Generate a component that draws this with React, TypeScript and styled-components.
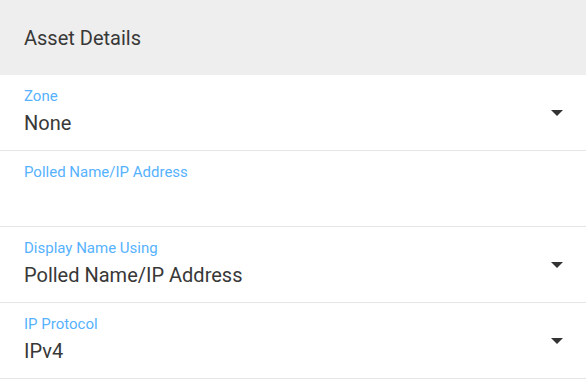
import React from "react";
import styled, { createGlobalStyle } from "styled-components";

const GlobalStyle = createGlobalStyle`
  html, body {
    margin: 0;
    padding: 0;
    background: #ffffff;
    font-family: Roboto, "Liberation Sans", Arial, sans-serif;
  }
`;

const Panel = styled.div`
  width: 586px;
  background: #ffffff;
`;

const Header = styled.div`
  height: 75px;
  background: #eeeeee;
  display: flex;
  align-items: center;
  padding: 0 24px;
  box-sizing: border-box;
  font-size: 20px;
  color: #383838;
`;

const Row = styled.div`
  height: 76px;
  box-sizing: border-box;
  border-bottom: 1px solid #e6e6e6;
  display: flex;
  align-items: flex-start;
  padding: 12px 23px 0 24px;
`;

const Field = styled.div`
  flex: 1;
  display: flex;
  flex-direction: column;
`;

const Label = styled.div`
  font-size: 15px;
  line-height: 18px;
  color: #56b2ff;
`;

const Value = styled.div`
  font-size: 20px;
  line-height: 24px;
  margin-top: 6px;
  color: #383838;
`;

type CaretProps = { $hidden?: boolean };

const Caret = styled.span<CaretProps>`
  width: 0;
  height: 0;
  margin-top: 23px;
  border-left: 6.5px solid transparent;
  border-right: 6.5px solid transparent;
  border-top: 6px solid #333333;
  visibility: ${p => (p.$hidden ? "hidden" : "visible")};
`;

type FieldDef = {
  label: string;
  value: string;
  select: boolean;
};

const fields: FieldDef[] = [
  { label: "Zone", value: "None", select: true },
  { label: "Polled Name/IP Address", value: "", select: false },
  { label: "Display Name Using", value: "Polled Name/IP Address", select: true },
  { label: "IP Protocol", value: "IPv4", select: true }
];

const App: React.FC = () => {
  return (
    <>
      <GlobalStyle />
      <Panel>
        <Header>Asset Details</Header>
        {fields.map(f => (
          <Row key={f.label}>
            <Field>
              <Label>{f.label}</Label>
              <Value>{f.value || "\u00a0"}</Value>
            </Field>
            <Caret $hidden={!f.select} />
          </Row>
        ))}
      </Panel>
    </>
  );
};

export default App;
